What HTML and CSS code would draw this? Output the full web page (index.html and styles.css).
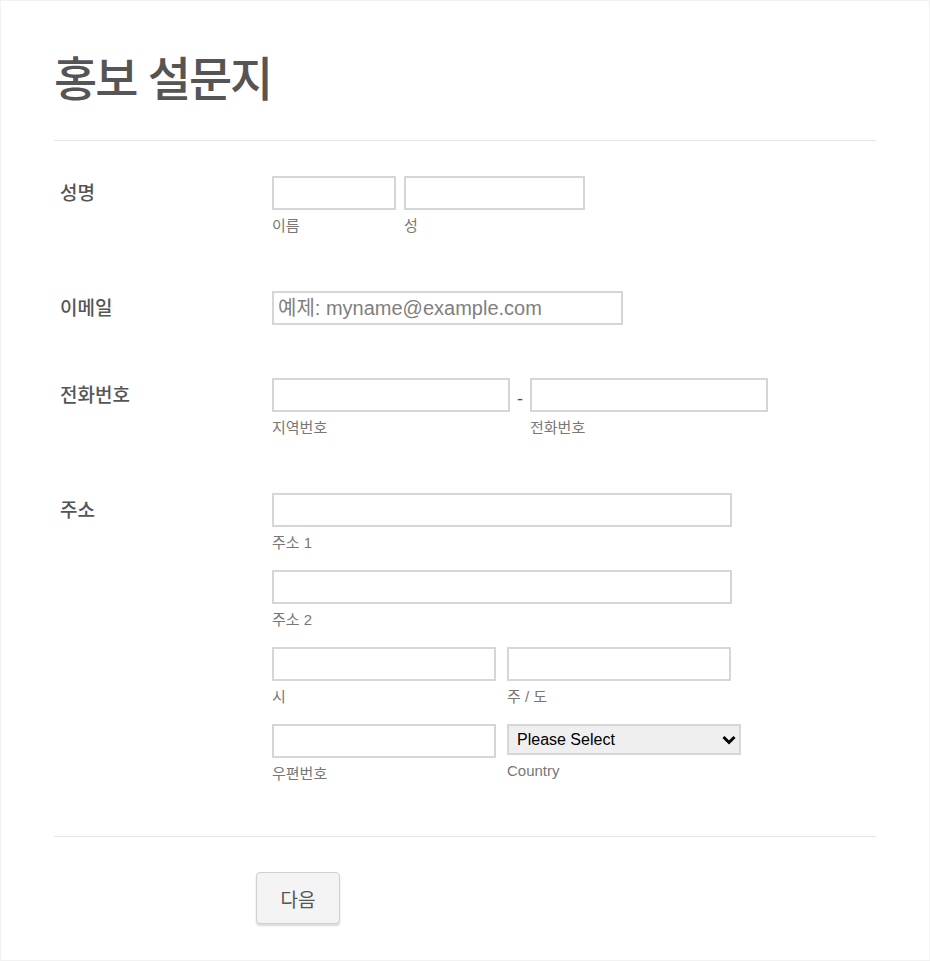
FILE: index.html
```html
<!DOCTYPE html>
<html lang="ko">
<head>
    <meta charset="UTF-8">
    <meta name="viewport" content="width=device-width, initial-scale=1.0">
    <title>홍보 설문지</title>
    <link rel="stylesheet" href="styles.css">
</head>
<body>

    <div class="form-wrap">
        <header class="form-header">
            <h1 class="form-title">홍보 설문지</h1>
        </header>

        <ul class="form-list">
            <!-- 성명 -->
            <li class="form-line">
                <label class="form-label">성명</label>
                <div class="form-fields">
                    <div class="field-row">
                        <div class="sub-field">
                            <input type="text" class="text-input w-first">
                            <span class="sub-label">이름</span>
                        </div>
                        <div class="sub-field">
                            <input type="text" class="text-input w-last">
                            <span class="sub-label">성</span>
                        </div>
                    </div>
                </div>
            </li>

            <!-- 이메일 -->
            <li class="form-line">
                <label class="form-label">이메일</label>
                <div class="form-fields">
                    <input type="email" class="text-input w-email" placeholder="예제: myname@example.com">
                </div>
            </li>

            <!-- 전화번호 -->
            <li class="form-line">
                <label class="form-label">전화번호</label>
                <div class="form-fields">
                    <div class="field-row no-gap">
                        <div class="sub-field">
                            <input type="tel" class="text-input w-phone">
                            <span class="sub-label">지역번호</span>
                        </div>
                        <span class="phone-dash">-</span>
                        <div class="sub-field">
                            <input type="tel" class="text-input w-phone">
                            <span class="sub-label">전화번호</span>
                        </div>
                    </div>
                </div>
            </li>

            <!-- 주소 -->
            <li class="form-line">
                <label class="form-label">주소</label>
                <div class="form-fields address">
                    <div class="sub-field">
                        <input type="text" class="text-input w-full">
                        <span class="sub-label">주소 1</span>
                    </div>
                    <div class="sub-field">
                        <input type="text" class="text-input w-full">
                        <span class="sub-label">주소 2</span>
                    </div>
                    <div class="field-row wide-gap">
                        <div class="sub-field">
                            <input type="text" class="text-input w-half">
                            <span class="sub-label">시</span>
                        </div>
                        <div class="sub-field">
                            <input type="text" class="text-input w-half">
                            <span class="sub-label">주 / 도</span>
                        </div>
                    </div>
                    <div class="field-row wide-gap">
                        <div class="sub-field">
                            <input type="text" class="text-input w-half">
                            <span class="sub-label">우편번호</span>
                        </div>
                        <div class="sub-field">
                            <div class="select-wrap">
                                <select class="country-select">
                                    <option>Please Select</option>
                                    <option>South Korea</option>
                                    <option>United States</option>
                                </select>
                                <!-- dropdown chevron -->
                                <svg class="select-arrow" width="14" height="10" viewBox="0 0 14 10">
                                    <path d="M1.5 2 L7 7.5 L12.5 2" fill="none" stroke="#000" stroke-width="3"/>
                                </svg>
                            </div>
                            <span class="sub-label">Country</span>
                        </div>
                    </div>
                </div>
            </li>
        </ul>

        <div class="form-buttons">
            <button type="button" class="next-btn">다음</button>
        </div>
    </div>

</body>
</html>
```

FILE: styles.css
```css
/* Global Styles */
body {
    font-family: "Liberation Sans", "Noto Sans CJK KR", sans-serif;
    margin: 0;
    padding: 0;
    background-color: #ffffff;
    color: #555;
}

.form-wrap {
    box-sizing: border-box;
    min-height: 961px;
    border: 1px solid #f2f2f2;
    padding: 0 53px;
}

.form-header {
    padding: 49px 0 38px;
    border-bottom: 1px solid #e6e6e6;
}

.form-title {
    margin: 0;
    font-family: "Noto Sans CJK KR", sans-serif;
    font-size: 47px;
    font-weight: 500;
    line-height: 52px;
    letter-spacing: -2px;
    color: #555;
}

.form-list {
    list-style: none;
    margin: 0;
    padding: 9px 0 23px;
    border-bottom: 1px solid #e6e6e6;
}

.form-line {
    display: flex;
    padding: 26px 0 27px;
}

.form-label {
    width: 212px;
    padding-left: 6px;
    flex-shrink: 0;
    font-family: "Noto Sans CJK KR", sans-serif;
    font-size: 19px;
    font-weight: 500;
    line-height: 32px;
    color: #555;
}

.form-fields.address {
    display: flex;
    flex-direction: column;
    gap: 15px;
}

.field-row {
    display: flex;
    align-items: flex-start;
    gap: 8px;
}

.field-row.wide-gap {
    gap: 11px;
}

.field-row.no-gap {
    gap: 0;
}

.sub-field {
    display: flex;
    flex-direction: column;
}

.sub-label {
    margin-top: 4px;
    font-size: 15px;
    line-height: 24px;
    color: #777;
}

.text-input {
    box-sizing: border-box;
    height: 34px;
    margin: 0;
    padding: 0 4px;
    border: 2px solid #d6d6d6;
    background: #fff;
    font-family: inherit;
    font-size: 20px;
    color: #333;
    outline: none;
}

.text-input::placeholder {
    color: #808080;
}

.w-first { width: 124px; }
.w-last { width: 181px; }
.w-email { width: 351px; }
.w-phone { width: 238px; }
.w-full { width: 460px; }
.w-half { width: 224px; }

.phone-dash {
    width: 20px;
    text-align: center;
    font-size: 18px;
    line-height: 42px;
    color: #555;
}

.select-wrap {
    position: relative;
    width: 234px;
}

.country-select {
    box-sizing: border-box;
    width: 234px;
    height: 31px;
    margin: 0;
    padding: 0 8px;
    border: 2px solid #d6d6d6;
    background-color: #efefef;
    font-family: "Liberation Sans", sans-serif;
    font-size: 16px;
    color: #000;
    appearance: none;
    -webkit-appearance: none;
}

.select-arrow {
    position: absolute;
    right: 5px;
    top: 11px;
    pointer-events: none;
}

.form-buttons {
    padding: 35px 0 0 202px;
}

.next-btn {
    width: 84px;
    height: 52px;
    border: 1px solid #cfcfcf;
    border-radius: 4px;
    background-color: #f4f4f4;
    box-shadow: 0 2px 2px rgba(0, 0, 0, 0.15);
    font-family: "Noto Sans CJK KR", sans-serif;
    font-size: 19px;
    color: #555;
    cursor: pointer;
}
```
